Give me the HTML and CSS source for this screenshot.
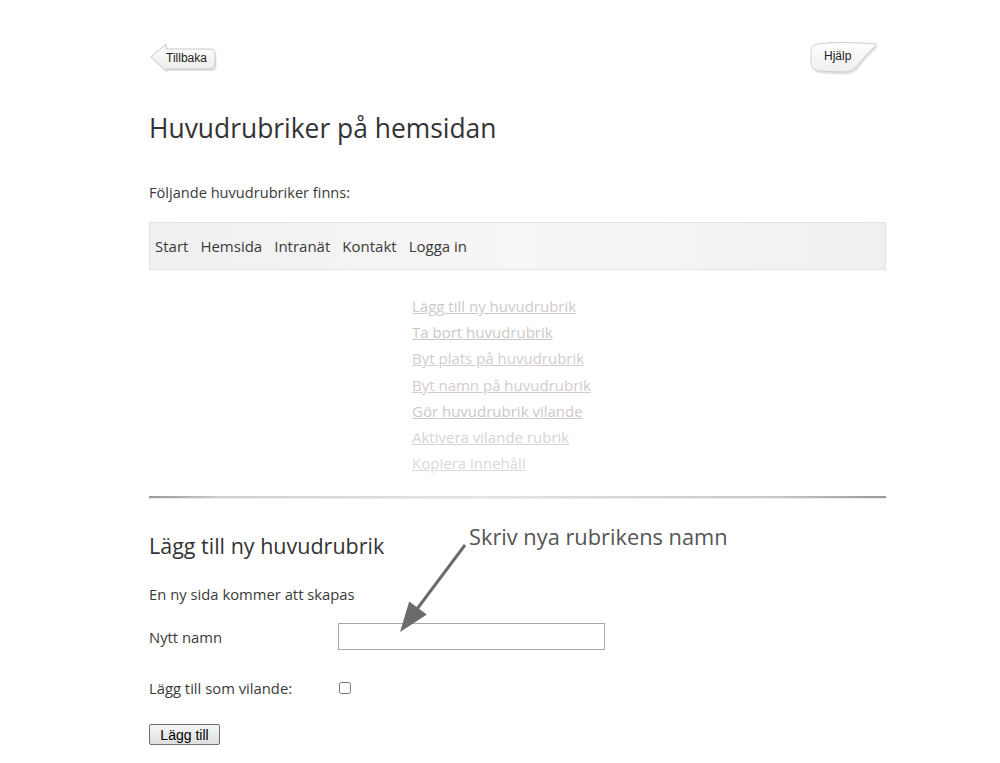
FILE: index.html
```html
<!DOCTYPE html>
<html lang="sv">
<head>
<meta charset="utf-8">
<title>Huvudrubriker</title>
<link rel="stylesheet" href="styles.css">
</head>
<body>
<div class="page">
  <div class="topbar">
    <a class="back" href="#">
      <svg class="shape" width="70" height="34" viewBox="0 0 70 34">
        <defs>
          <linearGradient id="gb" x1="0" y1="0" x2="0" y2="1">
            <stop offset="0" stop-color="#ffffff"/>
            <stop offset="1" stop-color="#ececec"/>
          </linearGradient>
        </defs>
        <path d="M2 16 L17 3 L17 8 L61 8 Q66 8 66 13 L66 23 Q66 28 61 28 L17 28 L17 30 Z" fill="#d8d8d8" transform="translate(1.5,2)" opacity="0.7"/>
        <path d="M2 16 L17 3 L17 8 L61 8 Q66 8 66 13 L66 23 Q66 28 61 28 L17 28 L17 30 Z" fill="url(#gb)" stroke="#c9c9c9" stroke-width="1"/>
      </svg>
      <span class="label">Tillbaka</span>
    </a>
    <a class="help" href="#">
      <svg class="shape" width="74" height="38" viewBox="0 0 74 38">
        <defs>
          <linearGradient id="gh" x1="0" y1="0" x2="0" y2="1">
            <stop offset="0" stop-color="#ffffff"/>
            <stop offset="1" stop-color="#eeeeee"/>
          </linearGradient>
        </defs>
        <path d="M8 4 Q30 1 68 4 Q55 16 48 26 Q42 33 30 32 L10 31 Q2 30 2 22 L2 12 Q2 5 8 4 Z" fill="#d6d6d6" transform="translate(1.5,2.5)" opacity="0.7"/>
        <path d="M8 4 Q30 1 68 4 Q55 16 48 26 Q42 33 30 32 L10 31 Q2 30 2 22 L2 12 Q2 5 8 4 Z" fill="url(#gh)" stroke="#cfcfcf" stroke-width="1"/>
      </svg>
      <span class="label">Hjälp</span>
    </a>
  </div>

  <h1 class="title">Huvudrubriker på hemsidan</h1>
  <p class="intro">Följande huvudrubriker finns:</p>

  <nav class="menu">
    <span>Start</span>
    <span>Hemsida</span>
    <span>Intranät</span>
    <span>Kontakt</span>
    <span>Logga in</span>
  </nav>

  <ul class="actions">
    <li><a href="#" class="c1">Lägg till ny huvudrubrik</a></li>
    <li><a href="#" class="c2">Ta bort huvudrubrik</a></li>
    <li><a href="#" class="c3">Byt plats på huvudrubrik</a></li>
    <li><a href="#" class="c3">Byt namn på huvudrubrik</a></li>
    <li><a href="#" class="c2">Gör huvudrubrik vilande</a></li>
    <li><a href="#" class="c4">Aktivera vilande rubrik</a></li>
    <li><a href="#" class="c5">Kopiera innehåll</a></li>
  </ul>

  <div class="rule"></div>

  <section class="form">
    <h2 class="subtitle">Lägg till ny huvudrubrik</h2>
    <p class="note">En ny sida kommer att skapas</p>
    <div class="row row-name">
      <label class="lbl">Nytt namn</label>
      <input class="field" type="text">
    </div>
    <div class="row row-check">
      <label class="lbl">Lägg till som vilande:</label>
      <input class="check" type="checkbox">
    </div>
    <button class="btn" type="button">Lägg till</button>

    <div class="callout">Skriv nya rubrikens namn</div>
    <svg class="arrow" width="80" height="100" viewBox="0 0 80 100">
      <line x1="75" y1="5" x2="27" y2="69" stroke="#6b6b6b" stroke-width="3"/>
      <polygon points="10,92 19.2,61.4 36.8,74.6" fill="#6b6b6b"/>
    </svg>
  </section>
</div>
</body>
</html>
```

FILE: styles.css
```css
html, body {
  margin: 0;
  padding: 0;
  background: #ffffff;
}
body {
  font-family: "Open Sans", "Noto Sans", sans-serif;
  color: #3a3a3a;
}
.page {
  width: 737px;
  margin-left: 149px;
  padding-top: 40px;
}
.topbar {
  display: flex;
  justify-content: space-between;
  height: 40px;
}
.back, .help {
  position: relative;
  display: block;
  text-decoration: none;
  color: #222;
  font-family: "Liberation Sans", Arial, sans-serif;
  font-size: 12px;
}
.back {
  width: 70px;
  height: 34px;
  margin-top: 1px;
}
.help {
  width: 74px;
  height: 38px;
  margin-right: 3px;
}
.shape {
  position: absolute;
  left: 0;
  top: 0;
}
.back .label {
  position: absolute;
  left: 17px;
  top: 10px;
}
.help .label {
  position: absolute;
  left: 15px;
  top: 9px;
}
.title {
  font-weight: normal;
  font-size: 26.4px;
  margin: 30px 0 0 0;
  line-height: 36px;
  color: #333;
}
.intro {
  font-size: 14.6px;
  margin: 36px 0 0 0;
  line-height: 20px;
  color: #3a3a3a;
}
.menu {
  margin-top: 20px;
  height: 46px;
  border: 1px solid #e3e3e3;
  background: linear-gradient(to right, #f0f0f0, #f6f6f6 50%, #f0f0f0);
  display: flex;
  align-items: center;
  gap: 12px;
  padding-left: 5px;
  font-size: 15px;
  color: #3a3a3a;
}
.actions {
  list-style: none;
  margin: 23px 0 0 263px;
  padding: 0;
}
.actions li {
  height: 26.2px;
  line-height: 26px;
  font-size: 15px;
}
.actions a {
  text-decoration: underline;
}
.c1 { color: #cfcaca; }
.c2 { color: #cdc8c8; }
.c3 { color: #d4cccc; }
.c4 { color: #d8d4d4; }
.c5 { color: #dcd8d8; }
.rule {
  margin-top: 20px;
  height: 2px;
  background: linear-gradient(to right, #999 0%, #d0d0d0 10%, #e4e4e4 45%, #c8c8c8 85%, #999 100%);
  border-bottom: 1px solid #ececec;
}
.form {
  position: relative;
  padding-top: 32px;
}
.subtitle {
  font-weight: normal;
  font-size: 21.5px;
  margin: 0;
  line-height: 30px;
  color: #333;
}
.note {
  font-size: 14.8px;
  margin: 23px 0 0 0;
  line-height: 20px;
}
.row {
  display: flex;
  align-items: center;
}
.lbl {
  width: 189px;
  font-size: 14.8px;
}
.row-name {
  margin-top: 19px;
  height: 27px;
}
.field {
  width: 265px;
  height: 25px;
  margin: 0;
  padding: 0;
  border: 1px solid #a9a9a9;
  box-sizing: content-box;
}
.row-check {
  margin-top: 28px;
  height: 20px;
}
.check {
  width: 12px;
  height: 12px;
  margin: 0 0 0 1px;
}
.btn {
  display: block;
  margin-top: 26px;
  font-family: "Liberation Sans", Arial, sans-serif;
  font-size: 14px;
  padding: 1px 6px;
  height: 21px;
  width: 71px;
  border: 1px solid #707070;
  border-radius: 2px;
  background: linear-gradient(#f6f6f6, #dedede);
  color: #000;
}
.callout {
  position: absolute;
  left: 320px;
  top: 23px;
  font-size: 21.8px;
  line-height: 30px;
  color: #555;
  font-family: "Open Sans", sans-serif;
}
.arrow {
  position: absolute;
  left: 241px;
  top: 41px;
}
```
